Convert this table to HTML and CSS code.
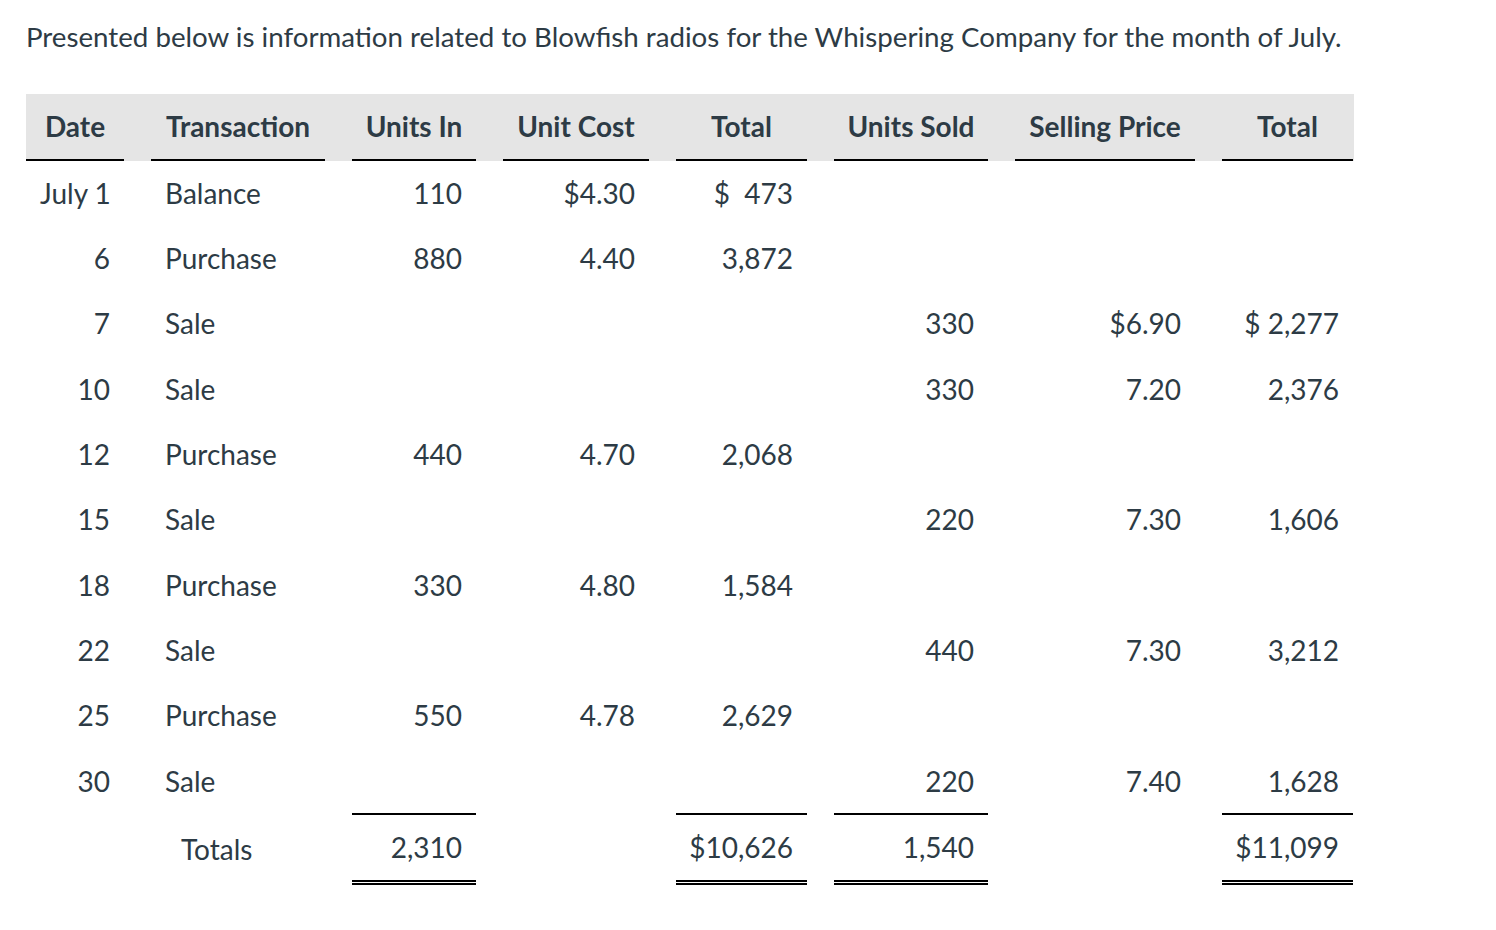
FILE: index.html
```html
<!DOCTYPE html>
<html lang="en">
<head>
<meta charset="utf-8">
<title>Blowfish radios</title>
<link rel="stylesheet" href="styles.css">
</head>
<body>
<p class="intro">Presented below is information related to Blowfish radios for the Whispering Company for the month of July.</p>
<div class="ledger">
  <div class="row head">
    <div class="cell">Date</div>
    <div class="cell">Transaction</div>
    <div class="cell">Units In</div>
    <div class="cell">Unit Cost</div>
    <div class="cell">Total</div>
    <div class="cell">Units Sold</div>
    <div class="cell">Selling Price</div>
    <div class="cell">Total</div>
  </div>
  <div class="row">
    <div class="cell num">July 1</div><div class="cell txt">Balance</div><div class="cell num">110</div><div class="cell num">$4.30</div><div class="cell num">$&nbsp;&nbsp;473</div><div class="cell num"></div><div class="cell num"></div><div class="cell num"></div>
  </div>
  <div class="row">
    <div class="cell num">6</div><div class="cell txt">Purchase</div><div class="cell num">880</div><div class="cell num">4.40</div><div class="cell num">3,872</div><div class="cell num"></div><div class="cell num"></div><div class="cell num"></div>
  </div>
  <div class="row">
    <div class="cell num">7</div><div class="cell txt">Sale</div><div class="cell num"></div><div class="cell num"></div><div class="cell num"></div><div class="cell num">330</div><div class="cell num">$6.90</div><div class="cell num">$ 2,277</div>
  </div>
  <div class="row">
    <div class="cell num">10</div><div class="cell txt">Sale</div><div class="cell num"></div><div class="cell num"></div><div class="cell num"></div><div class="cell num">330</div><div class="cell num">7.20</div><div class="cell num">2,376</div>
  </div>
  <div class="row">
    <div class="cell num">12</div><div class="cell txt">Purchase</div><div class="cell num">440</div><div class="cell num">4.70</div><div class="cell num">2,068</div><div class="cell num"></div><div class="cell num"></div><div class="cell num"></div>
  </div>
  <div class="row">
    <div class="cell num">15</div><div class="cell txt">Sale</div><div class="cell num"></div><div class="cell num"></div><div class="cell num"></div><div class="cell num">220</div><div class="cell num">7.30</div><div class="cell num">1,606</div>
  </div>
  <div class="row">
    <div class="cell num">18</div><div class="cell txt">Purchase</div><div class="cell num">330</div><div class="cell num">4.80</div><div class="cell num">1,584</div><div class="cell num"></div><div class="cell num"></div><div class="cell num"></div>
  </div>
  <div class="row">
    <div class="cell num">22</div><div class="cell txt">Sale</div><div class="cell num"></div><div class="cell num"></div><div class="cell num"></div><div class="cell num">440</div><div class="cell num">7.30</div><div class="cell num">3,212</div>
  </div>
  <div class="row">
    <div class="cell num">25</div><div class="cell txt">Purchase</div><div class="cell num">550</div><div class="cell num">4.78</div><div class="cell num">2,629</div><div class="cell num"></div><div class="cell num"></div><div class="cell num"></div>
  </div>
  <div class="row">
    <div class="cell num">30</div><div class="cell txt">Sale</div><div class="cell num"></div><div class="cell num"></div><div class="cell num"></div><div class="cell num">220</div><div class="cell num">7.40</div><div class="cell num">1,628</div>
  </div>
  <div class="row totals">
    <div class="cell"></div><div class="cell label">Totals</div><div class="cell num sum">2,310</div><div class="cell"></div><div class="cell num sum">$10,626</div><div class="cell num sum">1,540</div><div class="cell"></div><div class="cell num sum">$11,099</div>
  </div>
</div>
</body>
</html>
```

FILE: styles.css
```css
html, body {
  margin: 0;
  padding: 0;
  background: #ffffff;
}

body {
  font-family: Lato, "Open Sans", sans-serif;
  font-size: 28px;
  color: #2d3b45;
  padding: 0 0 0 26px;
}

.intro {
  margin: 0;
  padding-top: 17px;
  font-size: 27.7px;
  line-height: 40px;
  padding-left: 0;
}

.ledger {
  margin-top: 37px;
  width: 1328px;
}

.row {
  display: grid;
  grid-template-columns: 98px 174px 124px 146px 131px 154px 180px 131px;
  column-gap: 27px;
  height: 65.33px;
  align-items: center;
}

.cell {
  padding: 0 14px 2px;
  line-height: 40px;
  white-space: nowrap;
}

.head {
  background: #e5e5e5;
  height: 67px;
  align-items: stretch;
}

.head .cell {
  font-weight: 700;
  text-align: center;
  border-bottom: 2px solid #000;
  display: flex;
  align-items: center;
  justify-content: center;
  padding: 0 0 2px;
}

.num {
  text-align: right;
}

.txt {
  text-align: left;
}

.totals {
  height: auto;
  align-items: stretch;
  margin-top: -1px;
}

.totals .cell {
  height: 63px;
  display: flex;
  align-items: center;
}

.totals .label {
  padding-left: 30px;
  padding-top: 8px;
  height: 55px;
}

.totals .sum {
  justify-content: flex-end;
  border-top: 2px solid #000;
  border-bottom: 5px double #000;
}
```
